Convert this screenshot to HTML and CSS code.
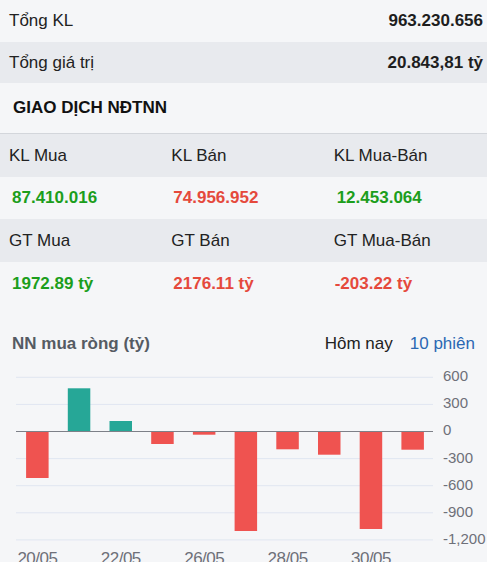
FILE: index.html
```html
<!DOCTYPE html>
<html lang="vi">
<head>
    <meta charset="UTF-8">
    <meta name="viewport" content="width=device-width, initial-scale=1.0">
    <title>Giao dịch NĐTNN</title>
    <link rel="stylesheet" href="styles.css">
</head>
<body>
    <div class="summary">
        <div class="sum-row">
            <span>Tổng KL</span>
            <b>963.230.656</b>
        </div>
        <div class="sum-row shade">
            <span>Tổng giá trị</span>
            <b>20.843,81 tỷ</b>
        </div>
    </div>

    <h2 class="section-title">GIAO DỊCH NĐTNN</h2>

    <div class="trade-grid">
        <div class="cell label">KL Mua</div>
        <div class="cell label">KL Bán</div>
        <div class="cell label">KL Mua-Bán</div>
        <div class="cell value up">87.410.016</div>
        <div class="cell value down">74.956.952</div>
        <div class="cell value up">12.453.064</div>
        <div class="cell label">GT Mua</div>
        <div class="cell label">GT Bán</div>
        <div class="cell label">GT Mua-Bán</div>
        <div class="cell value up">1972.89 tỷ</div>
        <div class="cell value down">2176.11 tỷ</div>
        <div class="cell value down neg">-203.22 tỷ</div>
    </div>

    <div class="chart-head">
        <span class="chart-title">NN mua ròng (tỷ)</span>
        <div class="tabs">
            <span class="tab">Hôm nay</span>
            <span class="tab active">10 phiên</span>
        </div>
    </div>

    <svg class="chart" width="487" height="202" viewBox="0 0 487 202">
        <g class="grid-lines">
            <line x1="16" x2="433" y1="17.3" y2="17.3"/>
            <line x1="16" x2="433" y1="44.4" y2="44.4"/>
            <line x1="16" x2="433" y1="98.6" y2="98.6"/>
            <line x1="16" x2="433" y1="125.7" y2="125.7"/>
            <line x1="16" x2="433" y1="152.8" y2="152.8"/>
            <line x1="16" x2="433" y1="179.9" y2="179.9"/>
        </g>
        <g class="bars">
            <rect class="neg-bar" x="26.1" y="71.5" width="22.5" height="46.5"/>
            <rect class="pos-bar" x="67.8" y="28.3" width="22.5" height="43.2"/>
            <rect class="pos-bar" x="109.5" y="61" width="22.5" height="10.5"/>
            <rect class="neg-bar" x="151.2" y="71.5" width="22.5" height="12.5"/>
            <rect class="neg-bar" x="192.9" y="71.5" width="22.5" height="3.2"/>
            <rect class="neg-bar" x="234.6" y="71.5" width="22.5" height="99.5"/>
            <rect class="neg-bar" x="276.3" y="71.5" width="22.5" height="17.8"/>
            <rect class="neg-bar" x="318" y="71.5" width="22.5" height="23.2"/>
            <rect class="neg-bar" x="359.7" y="71.5" width="22.5" height="97.5"/>
            <rect class="neg-bar" x="401.4" y="71.5" width="22.5" height="18.2"/>
        </g>
        <line class="zero-line" x1="16" x2="433" y1="71.5" y2="71.5"/>
        <g class="y-labels">
            <text x="443" y="17.3">600</text>
            <text x="443" y="44.4">300</text>
            <text x="443" y="71.5">0</text>
            <text x="443" y="98.6">-300</text>
            <text x="443" y="125.7">-600</text>
            <text x="443" y="152.8">-900</text>
            <text x="443" y="179.9">-1,200</text>
        </g>
        <g class="x-labels">
            <text x="37.4" y="203.5">20/05</text>
            <text x="120.8" y="203.5">22/05</text>
            <text x="204.2" y="203.5">26/05</text>
            <text x="287.6" y="203.5">28/05</text>
            <text x="371" y="203.5">30/05</text>
        </g>
    </svg>
</body>
</html>
```

FILE: styles.css
```css
body {
    margin: 0;
    background-color: #f5f6f8;
    font-family: "Liberation Sans", Arial, sans-serif;
    font-size: 17px;
    color: #222;
    overflow: hidden;
}

.sum-row {
    display: flex;
    justify-content: space-between;
    align-items: center;
    height: 42px;
    padding: 0 4px 0 9px;
}

.sum-row + .sum-row {
    height: 41px;
}

.sum-row b {
    color: #1e1e1e;
}

.shade {
    background-color: #e8eaee;
}

.section-title {
    margin: 0;
    height: 50px;
    line-height: 50px;
    padding-left: 13px;
    font-size: 17px;
    font-weight: bold;
    color: #111;
    border-bottom: 1px solid #d3d6db;
}

.trade-grid {
    display: grid;
    grid-template-columns: repeat(3, 1fr);
    grid-template-rows: 43px 42px 43px 43px;
}

.cell {
    display: flex;
    align-items: center;
}

.label {
    background-color: #e8eaee;
    padding-left: 9px;
}

.value {
    font-weight: bold;
    padding-left: 12px;
}

.value.down {
    padding-left: 11px;
}

.value.neg {
    padding-left: 10px;
}

.up {
    color: #1c9e1c;
}

.down {
    color: #e5493c;
}

.chart-head {
    display: flex;
    justify-content: space-between;
    align-items: center;
    height: 20px;
    margin-top: 29px;
    margin-bottom: 6px;
    padding: 0 12px 0 12px;
}

.chart-title {
    font-weight: bold;
    color: #555b63;
}

.tabs {
    display: flex;
    gap: 17px;
}

.tab {
    color: #222;
}

.tab.active {
    color: #2b68b3;
}

.chart {
    display: block;
}

.grid-lines line {
    stroke: #e0e6f1;
    stroke-width: 1;
}

.zero-line {
    stroke: #7d8088;
    stroke-width: 1.2;
}

.pos-bar {
    fill: #26a797;
}

.neg-bar {
    fill: #ef5350;
}

.y-labels text {
    font-family: "Liberation Sans", Arial, sans-serif;
    font-size: 15px;
    fill: #6e7079;
    dominant-baseline: middle;
}

.x-labels text {
    font-family: "Liberation Sans", Arial, sans-serif;
    font-size: 17px;
    letter-spacing: -0.5px;
    fill: #6e7079;
    text-anchor: middle;
}
```
